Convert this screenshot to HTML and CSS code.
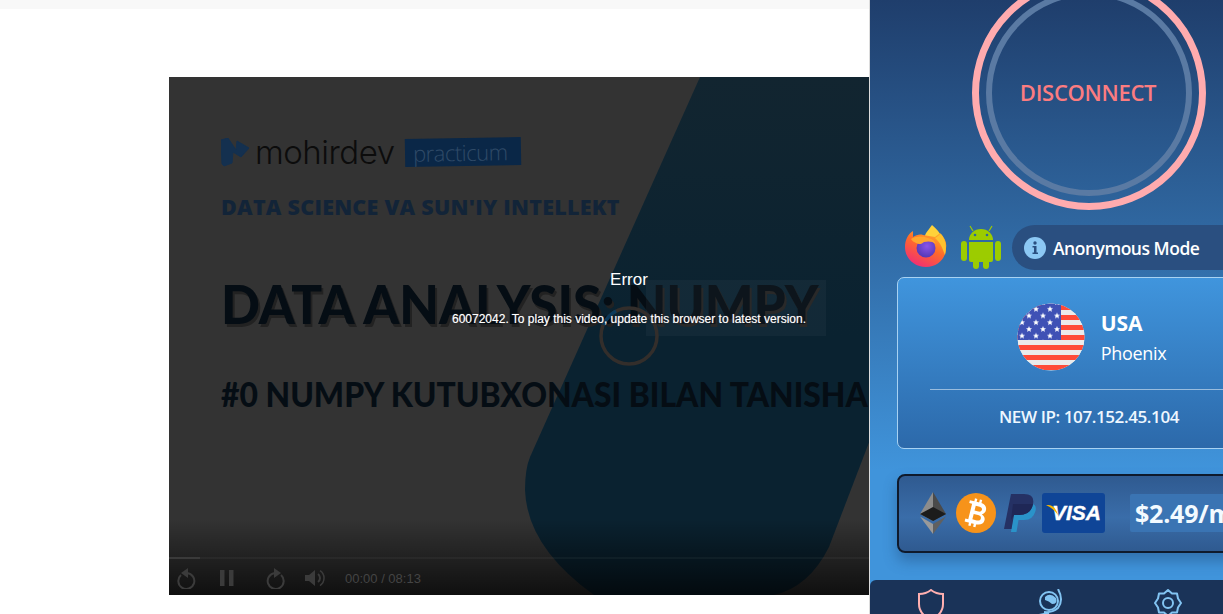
FILE: index.html
```html
<!DOCTYPE html>
<html lang="en">
<head>
<meta charset="utf-8">
<title>Video lesson</title>
<link rel="stylesheet" href="styles.css">
</head>
<body>
<main class="page">
  <div class="strip"></div>
  <section class="video">
    <svg class="wedge" viewBox="0 0 920 518" width="920" height="518" aria-hidden="true">
      <defs>
        <linearGradient id="wedgeFill" x1="0" y1="0" x2="0" y2="1">
          <stop offset="0" stop-color="#122530"/>
          <stop offset="0.5" stop-color="#0a2230"/>
          <stop offset="1" stop-color="#0a2230"/>
        </linearGradient>
      </defs>
      <path d="M531 0 L361 380 Q356 392 356 413 Q358 470 425 518 L605 518 Q640 510 660 470 L840 0 Z" fill="url(#wedgeFill)"/>
    </svg>
    <div class="slide">
      <div class="brand">
        <svg class="brand-mark" viewBox="0 0 28 29" width="28" height="29" aria-hidden="true">
          <path d="M0 2 L7 0 L15 12 L16 3 L28 10 L20 19 L12 14 L11 25 L3 28 L1 26 Z" fill="#14304f" stroke="#14304f" stroke-linejoin="round"/>
        </svg>
        <span class="brand-name">mohirdev</span>
        <span class="brand-tag">practicum</span>
      </div>
      <div class="course">DATA SCIENCE VA SUN'IY INTELLEKT</div>
      <h1 class="title">DATA ANALYSIS: NUMPY</h1>
      <h2 class="subtitle">#0 NUMPY KUTUBXONASI BILAN TANISHA</h2>
    </div>
    <div class="message-box"></div>
    <svg class="spinner" viewBox="0 0 60 60" width="60" height="60" aria-hidden="true">
      <circle cx="30" cy="30" r="28" fill="none" stroke="#332e2b" stroke-width="3.5"/>
      <path d="M4.5 19 A28 28 0 0 1 17 5" fill="none" stroke="#0b3a5c" stroke-width="3.5"/>
    </svg>
    <div class="error">
      <div class="error-title">Error</div>
      <div class="error-text">60072042. To play this video, update this browser to latest version.</div>
    </div>
    <div class="controls">
      <div class="progress"><div class="progress-fill"></div></div>
      <div class="control-row">
        <svg class="ctl ctl-back" viewBox="0 0 20 22" width="20" height="22" aria-hidden="true">
          <path d="M4 8 A8 8 0 1 0 10 6" fill="none" stroke="#3b3b3b" stroke-width="2"/>
          <path d="M11 1 L11 11 L4 6 Z" fill="#3b3b3b"/>
        </svg>
        <svg class="ctl ctl-pause" viewBox="0 0 14 16" width="14" height="16" aria-hidden="true">
          <rect x="0" y="0" width="4.5" height="16" fill="#3b3b3b"/>
          <rect x="9" y="0" width="4.5" height="16" fill="#3b3b3b"/>
        </svg>
        <svg class="ctl ctl-forward" viewBox="0 0 20 22" width="20" height="22" aria-hidden="true">
          <path d="M16 8 A8 8 0 1 1 10 6" fill="none" stroke="#3b3b3b" stroke-width="2"/>
          <path d="M9 1 L9 11 L16 6 Z" fill="#3b3b3b"/>
        </svg>
        <svg class="ctl ctl-volume" viewBox="0 0 20 18" width="20" height="18" aria-hidden="true">
          <path d="M0 6 H4 L10 1 V17 L4 12 H0 Z" fill="#3b3b3b"/>
          <path d="M13 5 A5 5 0 0 1 13 13" fill="none" stroke="#3b3b3b" stroke-width="2"/>
          <path d="M15 1.5 A9 9 0 0 1 15 16.5" fill="none" stroke="#3b3b3b" stroke-width="1.5"/>
        </svg>
        <span class="time">00:00 / 08:13</span>
      </div>
    </div>
  </section>
</main>

<aside class="panel">
  <div class="panel-inner">
    <button class="power" type="button"><span class="power-inner">DISCONNECT</span></button>

    <div class="status-row">
      <svg class="ico-firefox" viewBox="0 0 42 42" width="42" height="42" aria-hidden="true">
        <defs>
          <linearGradient id="ffBody" x1="0.8" y1="0" x2="0.2" y2="1">
            <stop offset="0" stop-color="#ffb52b"/>
            <stop offset="0.45" stop-color="#ff6a2a"/>
            <stop offset="1" stop-color="#f0287c"/>
          </linearGradient>
          <radialGradient id="ffGlobe" cx="0.55" cy="0.4" r="0.7">
            <stop offset="0" stop-color="#8a55e8"/>
            <stop offset="1" stop-color="#4b34b0"/>
          </radialGradient>
        </defs>
        <path d="M27 0 C23 6 19 9 20 13 L37 18 C38 11 33 5 27 0 Z" fill="#ffd23a"/>
        <path d="M35 8 C40 13 42 18 41 23 C41 34 32 42 21 42 C9 42 0 33 0 22 C0 15 3 9 8 6 L8 12 C11 10 15 9 18 10 L30 12 Z" fill="url(#ffBody)"/>
        <path d="M36 9 C41 16 42 22 40 30 C38 25 36 18 30 13 Z" fill="#ffc22e"/>
        <circle cx="21" cy="23" r="9.500" fill="url(#ffGlobe)"/>
        <path d="M6 14 C11 11 17 11 23 13 C27 14 29 15 31 19 C27 16 23 16 19 17 C17 19 14 20 11 18 C9 17 7 16 6 14 Z" fill="#ffa62e"/>
      </svg>
      <svg class="ico-android" viewBox="0 0 40 44" width="40" height="44" aria-hidden="true">
        <g fill="#9ccc00">
          <path d="M8 15 A12 11 0 0 1 32 15 Z"/>
          <path d="M8 17 H32 V35 Q32 37 30 37 H10 Q8 37 8 35 Z"/>
          <rect x="0" y="16" width="6" height="20" rx="3"/>
          <rect x="34" y="16" width="6" height="20" rx="3"/>
          <rect x="12" y="33" width="6" height="11" rx="3"/>
          <rect x="22" y="33" width="6" height="11" rx="3"/>
        </g>
        <path d="M12 6 L9 1 M28 6 L31 1" stroke="#9ccc00" stroke-width="1.2" fill="none"/>
        <circle cx="14" cy="10" r="1.3" fill="#2d659e"/>
        <circle cx="26" cy="10" r="1.3" fill="#2d659e"/>
      </svg>
      <div class="mode-pill">
        <svg class="ico-info" viewBox="0 0 22 22" width="22" height="22" aria-hidden="true">
          <circle cx="11" cy="11" r="11" fill="#8cc8f4"/>
          <circle cx="11" cy="6" r="1.7" fill="#2a4f80"/>
          <path d="M8.5 9 H12.5 V15.5 H14 V17 H8.5 V15.5 H10 V10.5 H8.5 Z" fill="#2a4f80"/>
        </svg>
        <span class="mode-label">Anonymous Mode</span>
      </div>
    </div>

    <section class="server-card">
      <div class="server-main">
        <svg class="flag" viewBox="0 0 68 68" width="68" height="68" aria-hidden="true">
          <defs>
            <clipPath id="flagClip"><circle cx="34" cy="34" r="33.5"/></clipPath>
            <pattern id="stripes" x="0" y="2" width="68" height="10" patternUnits="userSpaceOnUse">
              <rect width="68" height="5" fill="#ff4b38"/>
              <rect y="5" width="68" height="5" fill="#ebebeb"/>
            </pattern>
            <pattern id="stars" x="1" y="2" width="14" height="13.4" patternUnits="userSpaceOnUse">
              <path d="M4 1 L4.9 3 L7 3.2 L5.4 4.6 L5.9 6.7 L4 5.6 L2.1 6.7 L2.6 4.6 L1 3.2 L3.1 3 Z" fill="#fff"/>
              <path d="M11 7.7 L11.9 9.7 L14 9.900 L12.4 11.3 L12.9 13.4 L11 12.3 L9.1 13.4 L9.6 11.3 L8 9.900 L10.1 9.7 Z" fill="#fff"/>
            </pattern>
          </defs>
          <g clip-path="url(#flagClip)">
            <rect width="68" height="68" fill="#ebebeb"/>
            <rect width="68" height="67" fill="url(#stripes)"/>
            <rect width="44" height="37" fill="#3f51b5"/>
            <rect width="44" height="37" fill="url(#stars)"/>
          </g>
        </svg>
        <div class="server-name">
          <div class="country">USA</div>
          <div class="city">Phoenix</div>
        </div>
      </div>
      <div class="ip">NEW IP: 107.152.45.104</div>
    </section>

    <section class="pay-card">
      <svg class="ico-eth" viewBox="0 0 26 42" width="26" height="42" aria-hidden="true">
        <path d="M13 0 L0 22 L13 29 Z" fill="#8c8c8c"/>
        <path d="M13 0 L26 22 L13 29 Z" fill="#4a4a4a"/>
        <path d="M13 15 L0 22 L13 29 L26 22 Z" fill="#1c1c1c"/>
        <path d="M0 24.500 L13 42 L13 32 Z" fill="#9a9a9a"/>
        <path d="M26 24.500 L13 42 L13 32 Z" fill="#606060"/>
      </svg>
      <svg class="ico-btc" viewBox="0 0 40 40" width="40" height="40" aria-hidden="true">
        <circle cx="20" cy="20" r="20" fill="#f7931a"/>
        <g fill="#fff" transform="rotate(14 20 20)">
          <rect x="15.500" y="6" width="2.400" height="4"/>
          <rect x="20.500" y="6" width="2.400" height="4"/>
          <rect x="15.500" y="30" width="2.400" height="4"/>
          <rect x="20.500" y="30" width="2.400" height="4"/>
          <path fill-rule="evenodd" d="M11 9 H22 C27 9 29 12 29 15 C29 17 28 19 26 20 C29 21 30 23 30 25 C30 29 27 31 22 31 H11 V28 H14 V12 H11 Z M18 13 V18 H22 C24 18 25 17 25 15.500 C25 14 24 13 22 13 Z M18 21.500 V27 H22.500 C25 27 26 26 26 24.200 C26 22.500 25 21.500 22.500 21.500 Z"/>
        </g>
      </svg>
      <svg class="ico-paypal" viewBox="0 0 32 38" width="32" height="38" aria-hidden="true">
        <path d="M11 10 H27 Q33 10 31.500 17 Q29 26 20 26 H14.500 L12.500 38 H7 Z" fill="#2a93c9"/>
        <path d="M7 0 H20 Q31 0 29 10 Q27 21 15 21 H10 L7.500 35 H0 Z" fill="#253164"/>
        <path d="M9 10 H29 Q27 21 15 21 H10 L7 26 Z" fill="#1f2756"/>
      </svg>
      <div class="visa">
        <svg class="visa-swoosh" viewBox="0 0 12 10" width="12" height="10" aria-hidden="true">
          <path d="M0 0 Q9 -1 12 10 Q7 3 0 0 Z" fill="#f7b600"/>
        </svg>
        <span class="visa-word">VISA</span>
      </div>
      <div class="price">$2.49/mo</div>
    </section>

    <nav class="tabs">
      <div class="tab">
        <svg viewBox="0 0 26 32" width="26" height="32" aria-hidden="true">
          <path d="M13 1 Q18 5 25 5 V15 Q25 25 13 31 Q1 25 1 15 V5 Q8 5 13 1 Z" fill="none" stroke="#ffb0b0" stroke-width="2"/>
        </svg>
      </div>
      <div class="tab">
        <svg viewBox="0 0 26 28" width="26" height="28" aria-hidden="true">
          <circle cx="11" cy="12" r="9" fill="none" stroke="#82c4f2" stroke-width="2"/>
          <path d="M7 8 Q12 3 18 9 Q20 15 14 15 Q11 12 7 11 Z" fill="#82c4f2"/>
          <path d="M20 0 Q26 11 20 19 Q14 24 6 23 M1 26 L11 24" fill="none" stroke="#82c4f2" stroke-width="2"/>
        </svg>
      </div>
      <div class="tab tab-gear">
        <svg viewBox="0 0 28 28" width="28" height="28" aria-hidden="true">
          <path d="M14 1 L18 4.500 L23 4.500 L24 9.500 L27 14 L24 18.500 L23 23.500 L18 23.500 L14 27 L10 23.500 L5 23.500 L4 18.500 L1 14 L4 9.500 L5 4.500 L10 4.500 Z" fill="none" stroke="#82c4f2" stroke-width="2" stroke-linejoin="round"/>
          <circle cx="14" cy="14" r="5" fill="none" stroke="#82c4f2" stroke-width="2"/>
        </svg>
      </div>
    </nav>
  </div>
</aside>
</body>
</html>
```
FILE: styles.css
```css
* { box-sizing: border-box; }
html, body { margin: 0; height: 100%; overflow: hidden; background: #fff; }
body { font-family: "Open Sans", "Noto Sans", sans-serif; position: relative; }

.page { width: 870px; height: 614px; overflow: hidden; border-right: 1px solid #dcdcdc; }
.strip { height: 9px; background: #f8f8f8; }
.video { position: relative; width: 920px; height: 518px; margin: 68px 0 0 169px; background: #333; overflow: hidden; }
.wedge { position: absolute; left: 0; top: 0; }

.slide { position: relative; padding: 59px 0 0 52px; white-space: nowrap; }
.brand { display: flex; align-items: center; height: 32px; }
.brand-mark { flex: none; margin-right: 6px; }
.brand-name { font-family: Inter, sans-serif; font-weight: 300; font-size: 33px; letter-spacing: -0.5px; color: #0c0c0c; width: 150px; }
.brand-tag { font-family: "Open Sans", sans-serif; font-weight: 300; font-size: 22px; line-height: 28px; width: 116px; padding-left: 8px; background: #0a2747; color: #2f4a67; transform: rotate(-1deg); letter-spacing: -0.5px; }
.course { margin-top: 25px; font-family: "Open Sans", sans-serif; font-weight: 800; font-size: 21.5px; line-height: 28px; letter-spacing: 0.25px; color: #122438; }
.title { margin: 53px 0 0; font-family: Lato, sans-serif; font-weight: 900; font-size: 54px; line-height: 60px; color: #050d14; text-shadow: 2px 3px 0 #222; transform: scaleX(.95); transform-origin: left center; }
.subtitle { margin: 40px 0 0; font-family: Lato, sans-serif; font-weight: 900; font-size: 34.5px; line-height: 40px; color: #050d14; transform: scaleX(.923); transform-origin: left center; }

.message-box { position: absolute; left: 477px; top: 203px; width: 180px; height: 56px; background: rgba(255,255,255,.035); }
.spinner { position: absolute; left: 430px; top: 229px; }
.error { position: absolute; left: 0; right: 0; top: 193px; text-align: center; color: #fff; font-family: "Liberation Sans", Arial, sans-serif; }
.error-title { font-size: 17px; line-height: 20px; }
.error-text { margin-top: 21px; font-size: 12px; line-height: 16px; text-shadow: 0 0 1px rgba(255,255,255,.6), 0 0 2px #000; }

.controls { position: absolute; left: 0; right: 0; bottom: 0; height: 76px; background: linear-gradient(rgba(0,0,0,0), rgba(0,0,0,.7)); }
.progress { position: absolute; left: 0; right: 0; top: 38px; height: 2px; background: rgba(255,255,255,.04); }
.progress-fill { width: 31px; height: 2px; background: #3a3a3a; }
.control-row { position: absolute; left: 0; right: 0; top: 41px; height: 36px; display: flex; align-items: center; padding-left: 8px; }
.ctl { flex: none; }
.ctl-pause { margin-left: 23px; }
.ctl-forward { margin-left: 31px; }
.ctl-volume { margin-left: 20px; }
.time { margin-left: 20px; font-family: "Liberation Sans", Arial, sans-serif; font-size: 13px; color: #444; }

.panel { position: absolute; top: 0; left: 870px; right: 0; height: 614px; overflow: hidden; background: linear-gradient(#1f3e6c 0, #2f669f 220px, #4094db 470px, #4094db 100%); }
.panel-inner { width: 438px; height: 614px; display: flex; flex-direction: column; align-items: stretch; }

.power { flex: none; align-self: center; width: 234px; height: 234px; margin-top: -24px; padding: 0; border: 7px solid #ffabae; border-radius: 50%; background: none; display: flex; align-items: center; justify-content: center; font: inherit; }
.power-inner { width: 206px; height: 206px; border: 6px solid #5a7aa3; border-radius: 50%; display: flex; align-items: center; justify-content: center; padding: 0 2px 3px 0; font-weight: 600; font-size: 22px; letter-spacing: -0.3px; color: #fb7c80; }

.status-row { flex: none; display: flex; align-items: center; height: 45px; margin-top: 15px; padding-left: 35px; }
.ico-firefox { flex: none; margin: -3px 14px 0 0; }
.ico-android { flex: none; margin: -2px 11px 0 0; }
.mode-pill { flex: 1; height: 45px; display: flex; align-items: center; gap: 7px; padding-left: 12px; background: #2a4f80; border-radius: 23px 0 0 23px; }
.ico-info { flex: none; }
.mode-label { font-weight: 600; font-size: 17.5px; letter-spacing: -0.48px; color: #fff; white-space: nowrap; }

.server-card { flex: none; width: 384px; height: 172px; margin: 7px 0 0 27px; padding: 25px 32px 0; border: 1px solid #a8d2f2; border-radius: 7px; background: linear-gradient(#4095dd, #2c69aa); color: #fff; }
.server-main { display: flex; align-items: center; justify-content: center; gap: 16px; height: 68px; }
.flag { flex: none; margin-left: 5px; }
.server-name { padding-top: 2px; }
.country { font-weight: 700; font-size: 21px; line-height: 30px; }
.city { font-weight: 400; font-size: 18px; line-height: 30px; letter-spacing: -0.3px; }
.ip { margin-top: 18px; padding-top: 16px; border-top: 1px solid rgba(255,255,255,.5); text-align: center; font-weight: 600; font-size: 17px; line-height: 22px; letter-spacing: -0.4px; color: #eef7ff; }

.pay-card { flex: none; width: 384px; height: 79px; margin: 25px 0 0 27px; padding: 0 0 2px 21px; display: flex; align-items: center; border: 2px solid #0f1a2c; border-radius: 8px; background: linear-gradient(#2f5a90, #3a6da9 55%, #2f5a90); box-shadow: 0 8px 14px rgba(30,70,120,.45); }
.ico-eth { flex: none; margin-right: 10px; }
.ico-btc { flex: none; margin-right: 8px; }
.ico-paypal { flex: none; margin-right: 6px; }
.visa { flex: none; position: relative; width: 63px; height: 40px; background: #0f4597; border-radius: 3px; display: flex; align-items: center; justify-content: center; padding-left: 6px; }
.visa-swoosh { position: absolute; left: 4px; top: 12px; }
.visa-word { font-family: "Liberation Sans", Arial, sans-serif; font-style: italic; font-weight: 700; font-size: 21px; color: #fff; -webkit-text-stroke: 0.4px #fff; }
.price { flex: none; margin-left: 25px; height: 38px; padding: 0 5px; background: #3a74b3; border-radius: 2px; font-weight: 700; font-size: 25px; line-height: 38px; letter-spacing: -0.2px; color: #f2faff; white-space: nowrap; }

.tabs { flex: none; margin-top: 27px; height: 60px; display: flex; padding-top: 9px; padding-left: 1px; background: #1a3358; border-radius: 6px 0 0 0; }
.tab { width: 120px; display: flex; justify-content: center; align-items: flex-start; }
.tab-gear { margin-left: -3px; }
```
